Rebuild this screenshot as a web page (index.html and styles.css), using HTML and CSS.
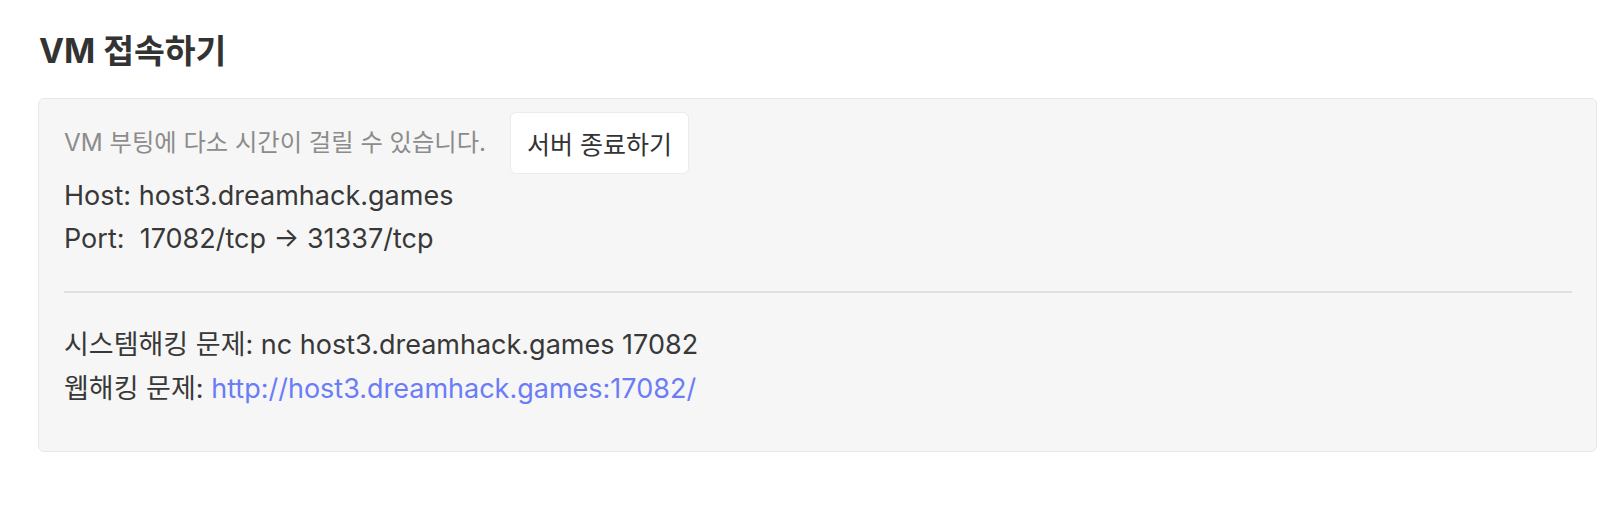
FILE: index.html
```html
<!DOCTYPE html>
<html lang="ko">
<head>
<meta charset="utf-8">
<title>VM 접속하기</title>
<link rel="stylesheet" href="styles.css">
</head>
<body>
<div class="page">
  <h1 class="title">VM 접속하기</h1>
  <section class="panel">
    <div class="status-row">
      <p class="notice">VM 부팅에 다소 시간이 걸릴 수 있습니다.</p>
      <button class="btn" type="button">서버 종료하기</button>
    </div>
    <div class="info">
      <p>Host: host3.dreamhack.games</p>
      <p>Port:&nbsp; 17082/tcp → 31337/tcp</p>
    </div>
    <hr class="divider">
    <div class="info info-problems">
      <p>시스템해킹 문제: nc host3.dreamhack.games 17082</p>
      <p>웹해킹 문제: <a class="link" href="#">http://host3.dreamhack.games:17082/</a></p>
    </div>
  </section>
</div>
</body>
</html>
```

FILE: styles.css
```css
html, body {
  margin: 0;
  background: #ffffff;
}

body {
  font-family: Inter, "Noto Sans CJK KR", sans-serif;
  color: #383838;
}

.page {
  padding: 31px 26px 0 38px;
}

.title {
  margin: 0 0 27px;
  padding-left: 1px;
  font-size: 33.5px;
  line-height: 40px;
  font-weight: 700;
  color: #333333;
}

.panel {
  background: #f6f6f6;
  border: 1px solid #e8e8eb;
  border-radius: 6px;
  padding: 13px 24px 40px 25px;
}

.status-row {
  display: flex;
  align-items: center;
  gap: 24px;
  height: 62px;
}

.notice {
  margin: 0;
  font-size: 24.3px;
  line-height: 1.2;
  color: #8c8c8c;
}

.btn {
  height: 62px;
  padding: 0 16px;
  background: #ffffff;
  border: 1px solid #ebebeb;
  border-radius: 6px;
  font-family: inherit;
  font-size: 25px;
  color: #333333;
}

.info p {
  margin: 0;
  font-size: 27px;
  line-height: 43px;
  color: #383838;
}

.info-problems p {
  line-height: 44px;
}

.divider {
  margin: 31px 0 30px;
  border: 0;
  border-top: 2px solid #e0e0e0;
  height: 0;
}

.link {
  color: #6b7cf7;
  text-decoration: none;
}
```
